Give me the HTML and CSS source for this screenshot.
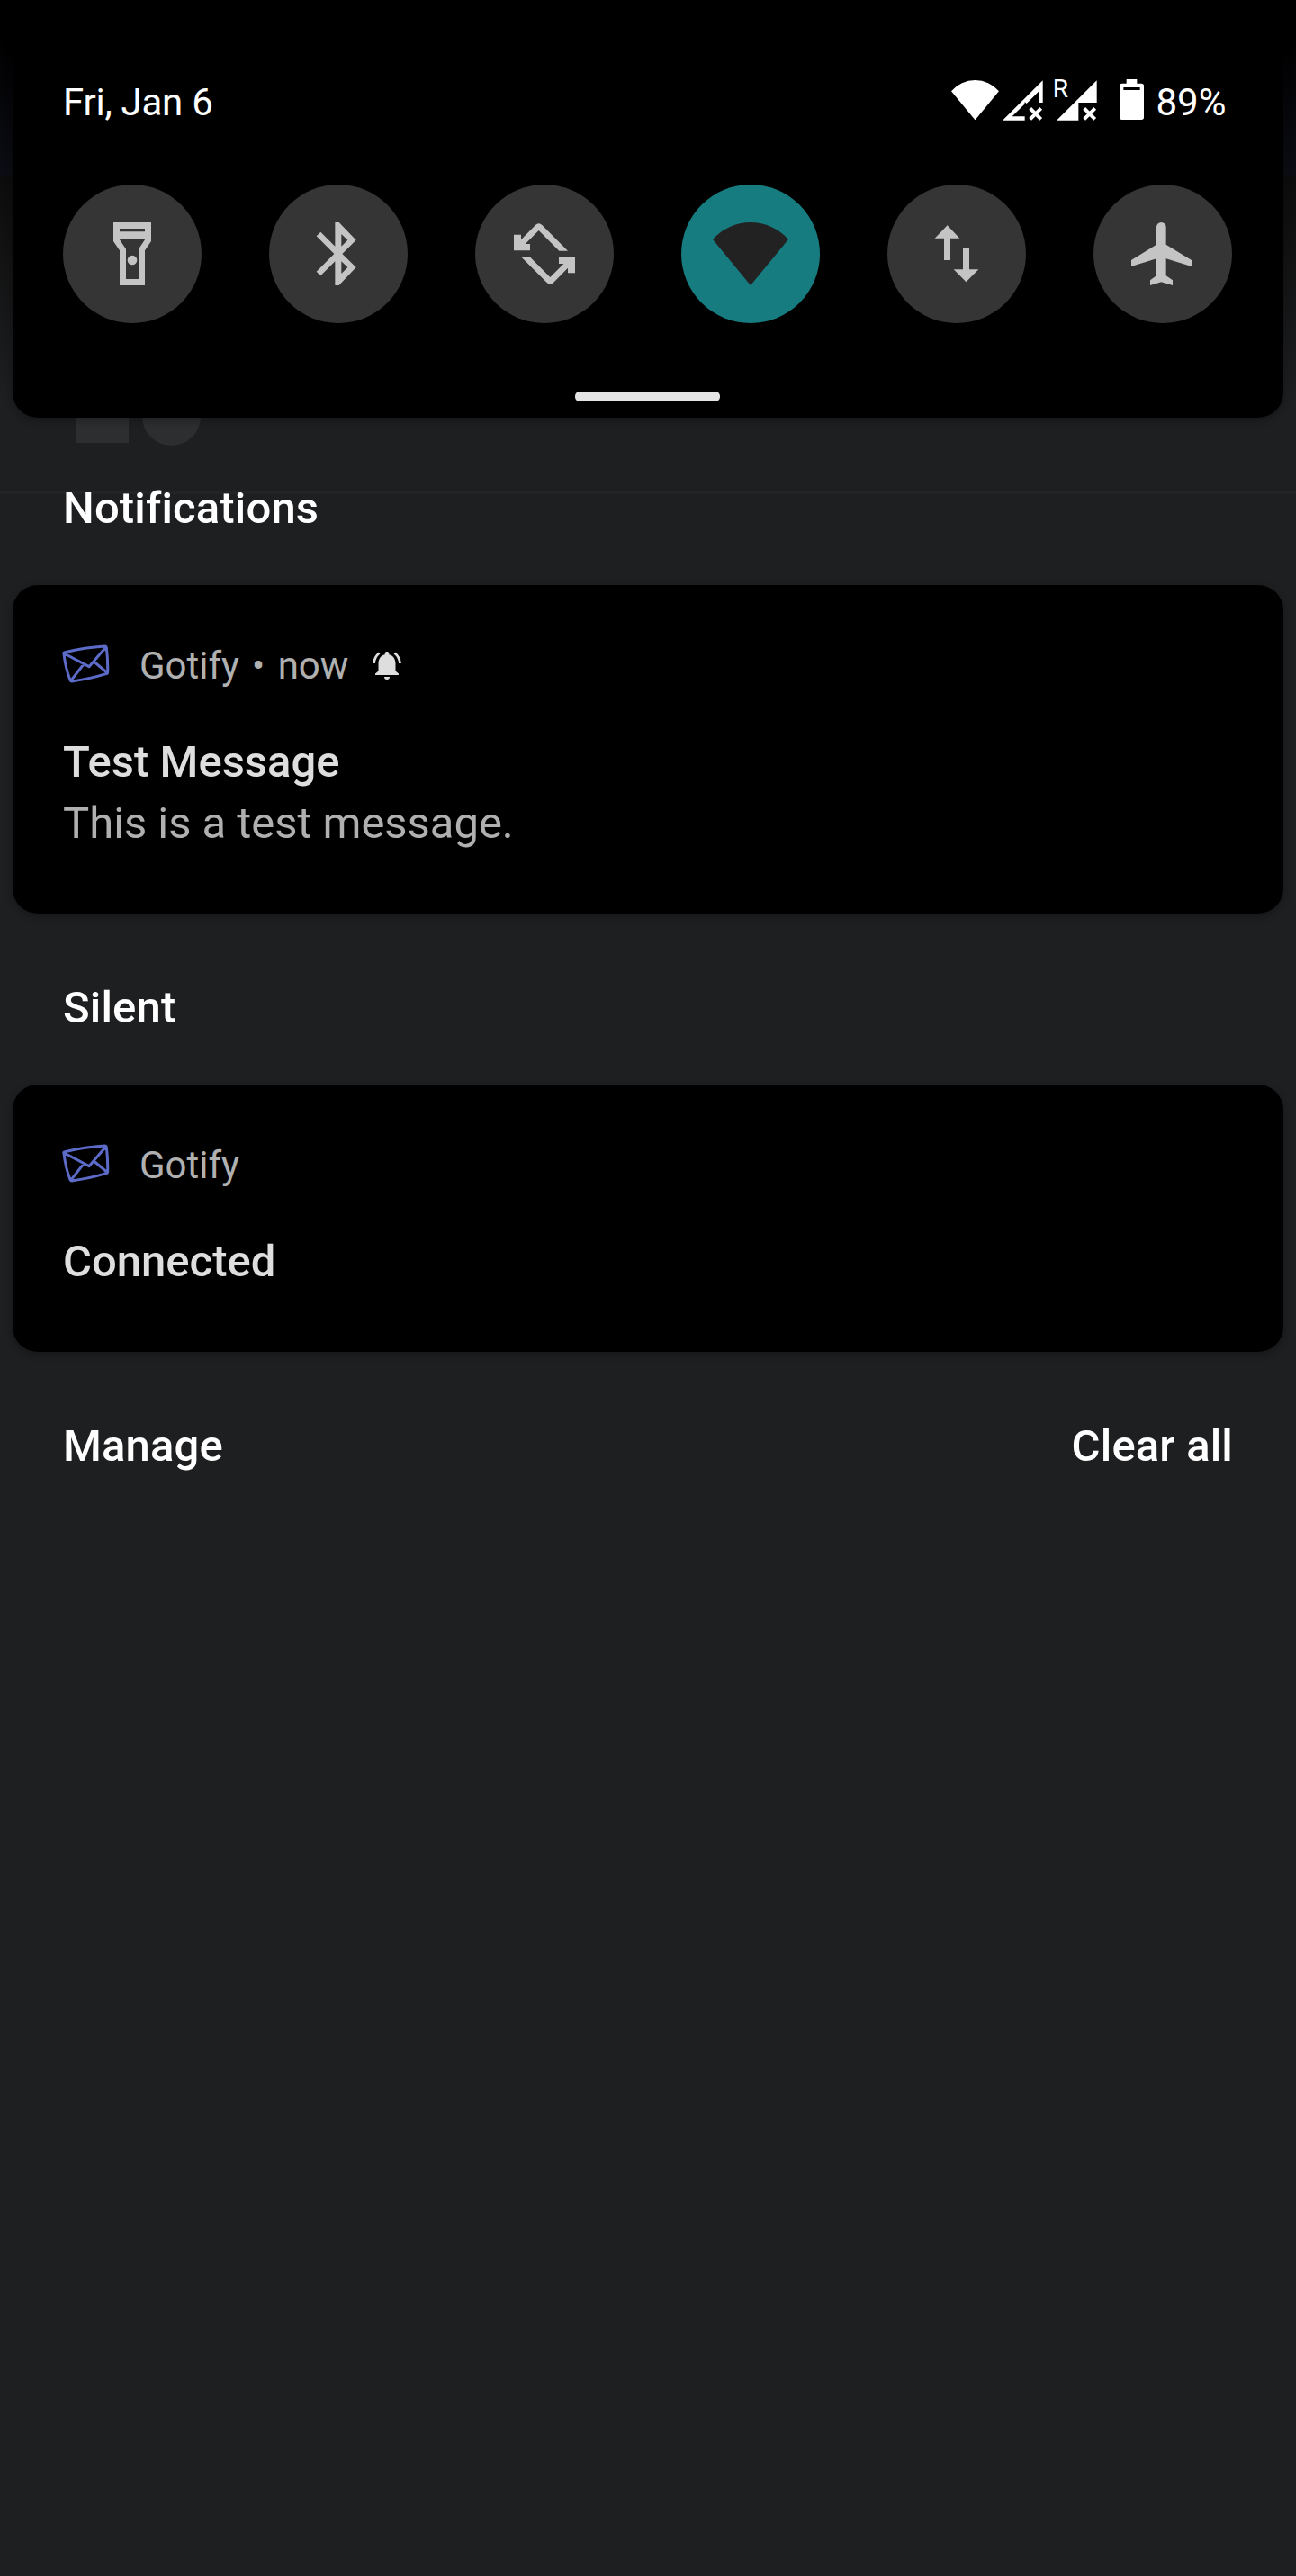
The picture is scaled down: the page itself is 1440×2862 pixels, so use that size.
FILE: index.html
```html
<!DOCTYPE html>
<html lang="en">
<head>
<meta charset="utf-8">
<title>Notification shade</title>
<link rel="stylesheet" href="styles.css">
</head>
<body>
<div class="screen">
  <div class="backdrop" aria-hidden="true">
    <i class="block"></i><i class="disc"></i><i class="rule"></i>
  </div>
  <section class="quick">
    <header class="status">
      <span class="date">Fri, Jan 6</span>
      <div class="indicators">
        <svg class="wifi" viewBox="48 57 159 133"><path d="M48 94A104 104 0 0 1 207 94L127.500 190Z"/></svg>
        <svg class="signal" viewBox="220 57 134 134"><path d="M354 58V132H340V95L300 135L294 130L293 137L252 178H294V191H220Z"/><path class="cross" d="M312 151L348 187M348 151L312 187"/></svg>
        <span class="roaming"><b>R</b><svg class="signal" viewBox="400 57 134 134"><path d="M534 58V132H473V191H400Z"/><path class="cross" d="M492 151L528 187M528 151L492 187"/></svg></span>
        <svg class="battery" viewBox="609 55 81 135"><path fill-rule="evenodd" d="M632 55H667V69H682Q690 69 690 77V182Q690 190 682 190H617Q609 190 609 182V77Q609 69 617 69H632ZM622 82V91H677V82Z"/></svg>
        <span class="percent">89%</span>
      </div>
    </header>
    <div class="tiles">
      <div class="tile"><svg viewBox="315 720 252 252"><path fill-rule="evenodd" d="M378 741H504V804L483 835V951H399V835L378 804ZM399 762V772H483V762ZM399 795V799L420 830V930H462V830L483 799V795Z"/><circle cx="441" cy="867" r="16"/></svg></div>
      <div class="tile"><svg viewBox="1002 720 252 252"><path fill-rule="evenodd" d="M1117 741H1130L1187 800L1141 846L1187 891L1130 951H1117V871L1069 919L1055 905L1114 846L1055 787L1069 773L1117 821ZM1138 780V821L1159 800ZM1138 871V912L1159 891Z"/></svg></div>
      <div class="tile"><svg viewBox="249 150 252 252"><path id="turn" d="M273 212H297V229L345 180Q356 170 367 180L453 266H424L356 198L311 243H327V265H273Z"/><use href="#turn" transform="rotate(180 375 276)"/></svg></div>
      <div class="tile on"><svg viewBox="0 0 24 24"><path d="M0 7.400A16 16 0 0 1 24 7.400L12 22Z"/></svg></div>
      <div class="tile"><svg viewBox="183 150 252 252"><path d="M278 181L319 224H288V297H267V224H236ZM330 255H351V328H382L340.500 370L299 328H330Z"/></svg></div>
      <div class="tile"><svg viewBox="870 150 252 252"><path d="M975 187A16 16 0 0 1 1007 187V245L1092 297V318L1007 292V349L1029 364V381L991 370L954 381V364L975 349V292L891 318V297L975 245Z"/></svg></div>
    </div>
    <div class="handle"></div>
  </section>

  <h2>Notifications</h2>
  <article class="card">
    <div class="source">
      <svg class="mail" viewBox="88 78 158 128"><path d="M94 109Q92 105 97 104Q165 88 230 84Q235 84 236 89Q241 130 240 170Q240 175 235 176Q180 193 120 201Q116 201 115 197Q99 155 94 109ZM95 108L178 152L234 87M117 199L160 144M239 173L194 135"/></svg>
      <span>Gotify</span><span class="dot">•</span><span>now</span>
      <svg class="bell" viewBox="414 724 32 32"><path d="M417 750V748.500L420.500 745.500V737.500C420.500 732 423 728.300 427.700 727.200V726.200A2.300 2.300 0 0 1 432.300 726.200V727.200C437 728.300 439.500 732 439.500 737.500V745.500L443 748.500V750ZM427 752H433A3 3 0 0 1 427 752Z"/><path class="ring" d="M421.500 725.500Q416 730 415.500 737M438.500 725.500Q444 730 444.500 737"/></svg>
    </div>
    <h3>Test Message</h3>
    <p>This is a test message.</p>
  </article>

  <h2 class="later">Silent</h2>
  <article class="card silent">
    <div class="source">
      <svg class="mail" viewBox="88 78 158 128"><path d="M94 109Q92 105 97 104Q165 88 230 84Q235 84 236 89Q241 130 240 170Q240 175 235 176Q180 193 120 201Q116 201 115 197Q99 155 94 109ZM95 108L178 152L234 87M117 199L160 144M239 173L194 135"/></svg>
      <span>Gotify</span>
    </div>
    <h3>Connected</h3>
  </article>

  <footer><span>Manage</span><span>Clear all</span></footer>
</div>
</body>
</html>
```
FILE: styles.css
```css
* { box-sizing: border-box; }
body { margin: 0; background: #1e1f21; font-family: Roboto, sans-serif; color: #fff; }
svg { display: block; fill: currentColor; flex: none; }
h2, h3, p { margin: 0; font-size: 49px; line-height: 58px; font-weight: 500; }

.screen {
  position: relative;
  height: 2862px;
  padding: 0 14px;
  overflow: hidden;
  background: linear-gradient(#000 0, #000 40px, #0c0d14 195px, #0c0c0c 196px, #1e1f21 450px);
}

/* Home screen showing faintly through the scrim */
.backdrop i { position: absolute; background: #2d2e30; }
.backdrop .block { left: 85px; top: 440px; width: 58px; height: 52px; }
.backdrop .disc { left: 158px; top: 430px; width: 65px; height: 65px; border-radius: 50%; }
.backdrop .rule { left: 0; top: 545px; width: 100%; height: 4px; background: #232426; }

.quick {
  position: relative;
  height: 464px;
  padding: 89px 57px 0 56px;
  background: #000;
  border-radius: 0 0 28px 28px;
  box-shadow: 0 3px 10px rgba(0, 0, 0, .3);
}
.status { display: flex; justify-content: space-between; height: 116px; font-size: 42px; line-height: 50px; }
.date { letter-spacing: -.250px; }
.indicators { display: flex; padding-right: 6.500px; }
.wifi { width: 53px; height: 44.300px; margin: 0 4.300px 0 0; }
.signal { width: 44.700px; height: 44.700px; margin-top: 0; }
.cross { fill: none; stroke: currentColor; stroke-width: 12; }
.roaming { position: relative; margin: 0 25px 0 15.300px; }
.roaming b { position: absolute; left: -4px; top: -7px; font-size: 28px; line-height: 34px; font-weight: 400; }
.battery { width: 27px; height: 45px; margin-top: -1px; }
.percent { margin-left: 14px; }

.tiles { display: flex; justify-content: space-between; }
.tile {
  display: grid;
  place-items: center;
  width: 154px;
  height: 154px;
  border-radius: 50%;
  background: #353535;
  color: #c4c4c4;
}
.tile svg { width: 84px; height: 84px; }
.tile.on { background: #177c80; color: #222; }
.handle { width: 161px; height: 11px; margin: 76px auto 0; border-radius: 5px; background: #e4e4e4; }

h2 { position: relative; padding: 72px 56px 56px; letter-spacing: .150px; }
h2.later { padding-top: 76px; }
.card {
  position: relative;
  height: 365px;
  padding: 65px 56px 0;
  border-radius: 28px;
  background: #000;
  color: #dedede;
  box-shadow: 0 3px 8px rgba(0, 0, 0, .3);
}
.card.silent { height: 297px; }
.source { display: flex; height: 103px; color: #b0b0b0; font-size: 42px; line-height: 50px; }
.mail { width: 52.700px; height: 42.700px; margin: 1px 33px 0 -.700px; fill: none; stroke: #5c6bc8; stroke-width: 9; stroke-linejoin: round; }
.dot { margin: 0 14.500px 0 14px; }
.bell { width: 32px; height: 32px; margin: 9px 0 0 26.500px; color: #dedede; }
.ring { fill: none; stroke: currentColor; stroke-width: 2.800; }
.card p { margin-top: 10px; font-weight: 400; color: #b0b0b0; letter-spacing: -.050px; }

footer {
  display: flex;
  justify-content: space-between;
  padding: 76px 56px 0;
  font-size: 49px;
  line-height: 58px;
  font-weight: 500;
  letter-spacing: .150px;
}
```
